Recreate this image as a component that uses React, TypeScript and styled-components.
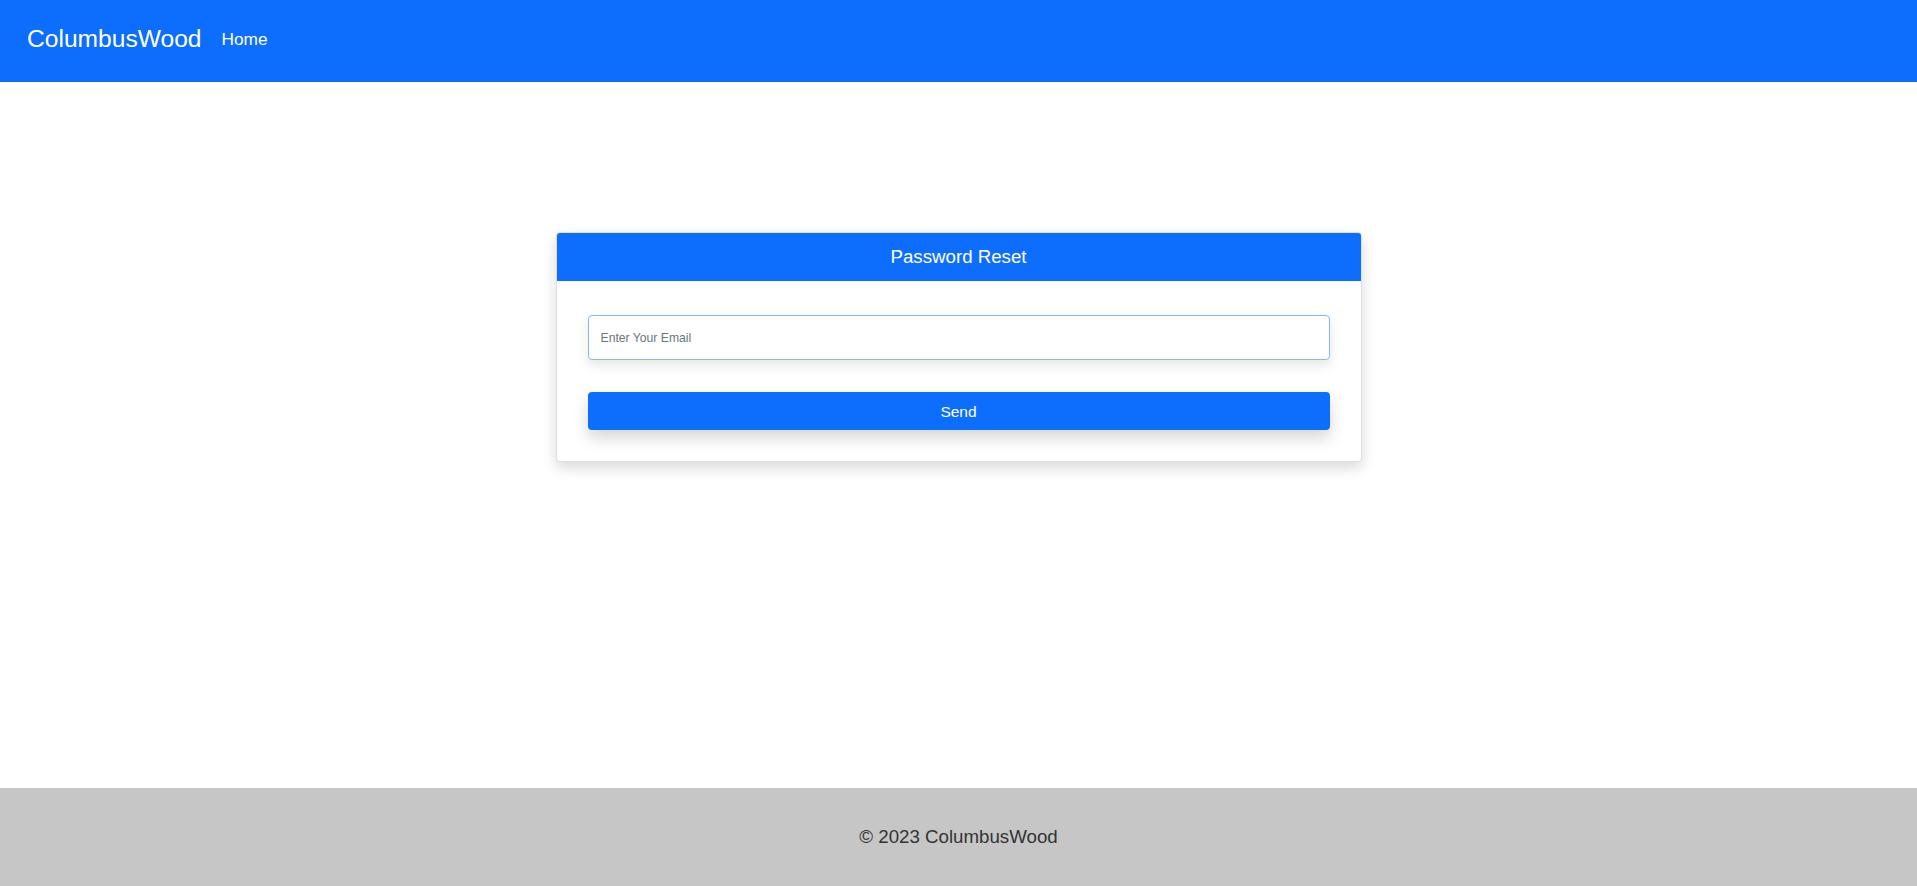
import React from "react";
import styled, { createGlobalStyle } from "styled-components";

const GlobalStyle = createGlobalStyle`
  html, body { margin: 0; padding: 0; }
  body {
    font-family: "Liberation Sans", Arial, Helvetica, sans-serif;
    background: #ffffff;
    color: #212529;
  }
  * { box-sizing: border-box; }
`;

const Page = styled.div`
  min-height: 100vh;
  display: flex;
  flex-direction: column;
`;

const NavBar = styled.nav`
  height: 82px;
  background: #0d6efd;
  display: flex;
  align-items: center;
  padding: 0 0 4px 27px;
  gap: 20px;
`;

const Brand = styled.a`
  color: #ffffff;
  font-size: 24.6px;
  text-decoration: none;
  line-height: 1;
`;

const NavLink = styled.a`
  color: #ffffff;
  font-size: 17.3px;
  text-decoration: none;
  line-height: 1;
  padding-top: 2px;
`;

const Main = styled.main`
  flex: 1;
  display: flex;
  justify-content: center;
  align-items: flex-start;
  padding-top: 150px;
`;

const Card = styled.div`
  width: 806px;
  background: #ffffff;
  border: 1px solid rgba(0, 0, 0, 0.12);
  border-radius: 4px;
  box-shadow: 0 6px 14px rgba(0, 0, 0, 0.15);
  overflow: hidden;
`;

const CardHeader = styled.div`
  height: 48px;
  background: #0d6efd;
  color: #ffffff;
  font-size: 18.7px;
  display: flex;
  align-items: center;
  justify-content: center;
  padding-bottom: 1px;
`;

const CardBody = styled.div`
  padding: 34px 31px 31px 31px;
  display: flex;
  flex-direction: column;
  gap: 32px;
`;

const EmailInput = styled.input`
  height: 45px;
  width: 100%;
  border: 1px solid #86b7fe;
  border-radius: 4px;
  padding: 0 12px;
  font-family: "Liberation Sans", Arial, sans-serif;
  font-size: 12.2px;
  color: #212529;
  box-shadow: 0 5px 12px rgba(0, 0, 0, 0.1);
  outline: none;
  &::placeholder { color: #6c757d; }
`;

const SendButton = styled.button`
  height: 38px;
  width: 100%;
  background: #0d6efd;
  color: #ffffff;
  border: none;
  border-radius: 4px;
  font-family: "Liberation Sans", Arial, sans-serif;
  font-size: 15.5px;
  padding-top: 2px;
  box-shadow: 0 8px 16px rgba(0, 0, 0, 0.16);
  cursor: pointer;
`;

const Footer = styled.footer`
  height: 98px;
  background: #c6c6c6;
  display: flex;
  align-items: center;
  justify-content: center;
  color: #333333;
  font-size: 18.7px;
`;

export default function App() {
  return (
    <>
      <GlobalStyle />
      <Page>
        <NavBar>
          <Brand href="#">ColumbusWood</Brand>
          <NavLink href="#">Home</NavLink>
        </NavBar>
        <Main>
          <Card>
            <CardHeader>Password Reset</CardHeader>
            <CardBody>
              <EmailInput type="email" placeholder="Enter Your Email" autoFocus />
              <SendButton type="button">Send</SendButton>
            </CardBody>
          </Card>
        </Main>
        <Footer>© 2023 ColumbusWood</Footer>
      </Page>
    </>
  );
}
